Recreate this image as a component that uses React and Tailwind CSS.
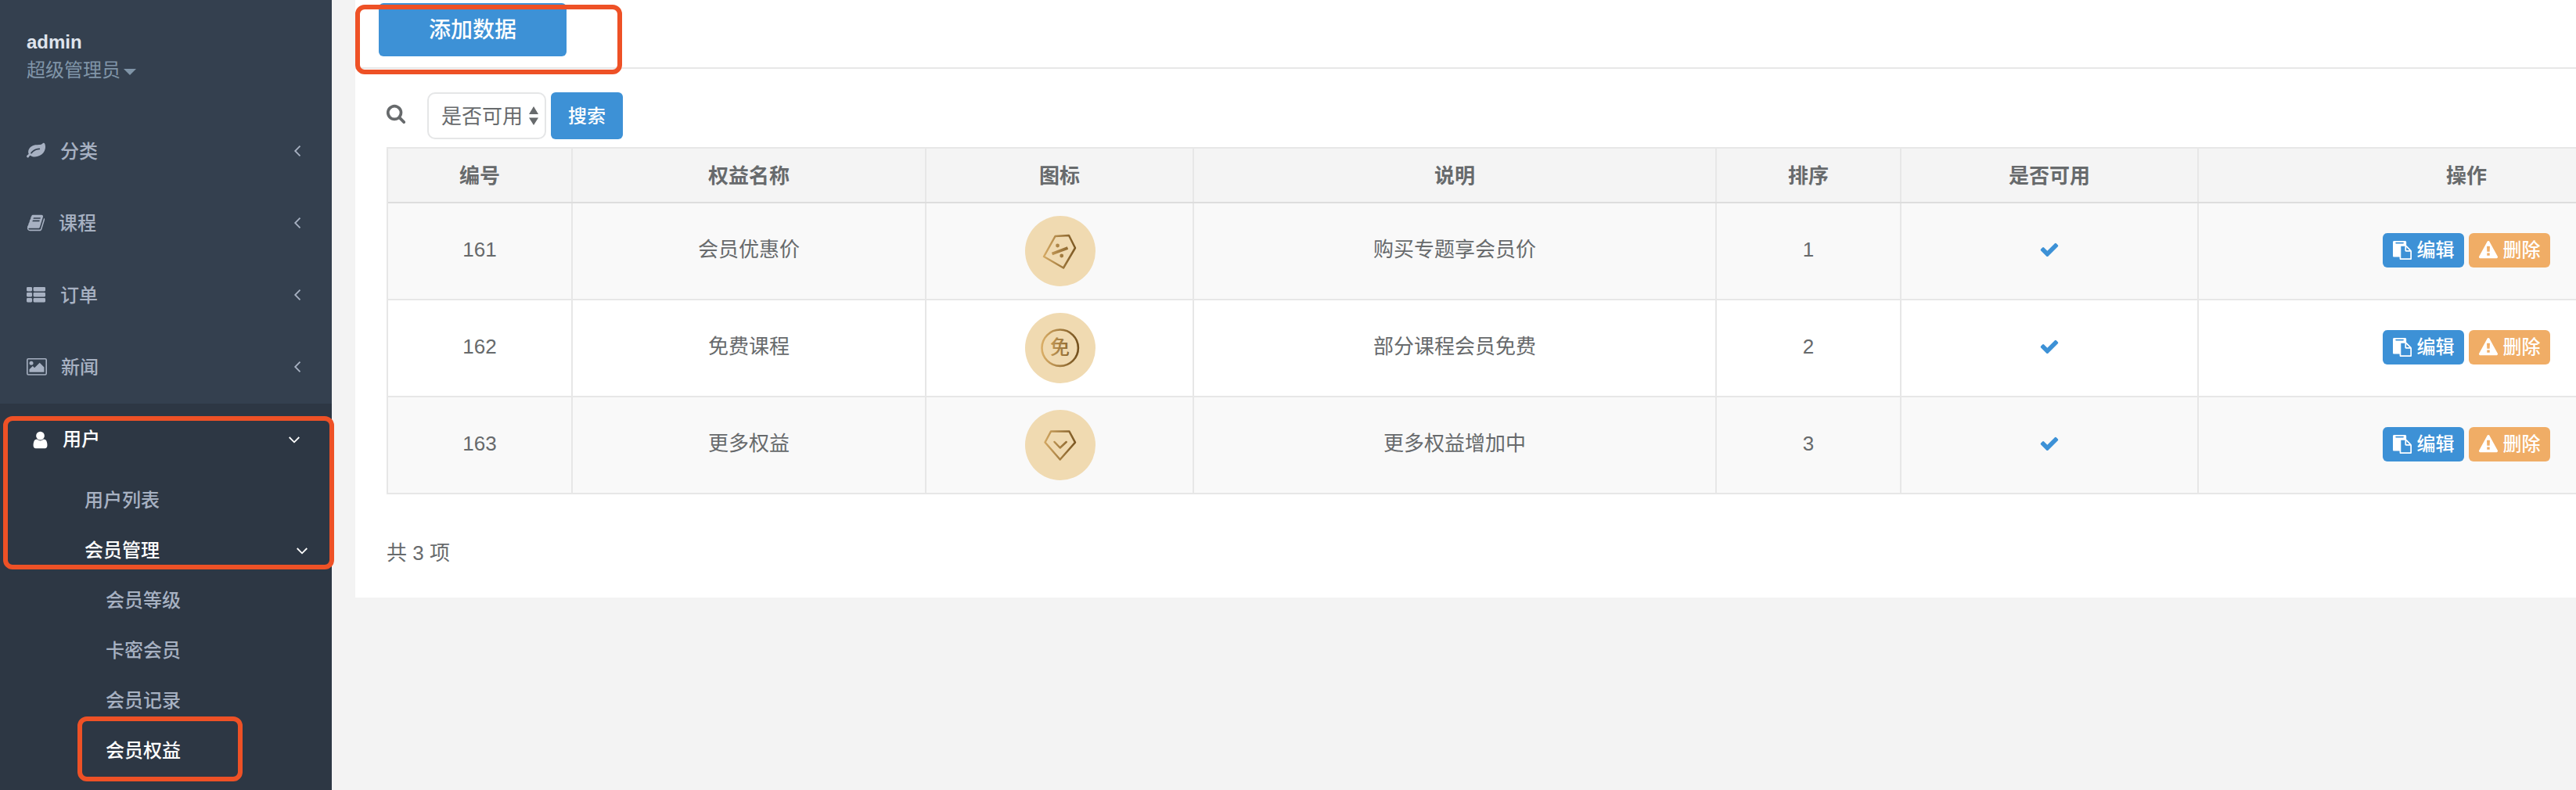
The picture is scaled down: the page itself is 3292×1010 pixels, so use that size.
import clsx from 'clsx';

const ICONS = {
    leaf: "M1280 704q0-26-19-45t-45-19q-172 0-318 49.5t-259.5 134-235.5 219.5q-19 21-19 45 0 26 19 45t45 19q24 0 45-19 27-24 74-71t67-66q137-124 268.5-176t313.5-52q26 0 45-19t19-45zM1792 506q0 95-20 193-46 224-184.5 383t-357.5 268q-214 108-438 108-148 0-286-47-15-5-88-42t-96-37q-16 0-39.5 32t-45 70-52.5 70-60 32q-43 0-63.5-17.5t-45.5-59.5q-2-4-6-11t-5.5-10-3-9.5-1.5-13.5q0-35 31-73.5t68-65.5 68-56 31-48q0-4-14-38t-16-44q-9-51-9-104 0-115 43.5-220t119-184.5 170.5-139 204-95.5q55-18 145-25.5t179.5-9 178.5-6 163.5-24 113.5-56.5l29.5-29.5 29.5-28 27-20 36.5-16 43.5-4.5q39 0 70.5 46t47.5 112 24 124 8 96z",
    book: "M1703 478q40 57 18 129l-275 906q-19 64-76.5 107.5t-122.5 43.5h-923q-77 0-148.5-53.5t-99.5-131.5q-24-67-2-127 0-4 3-27t4-37q1-8-3-21.5t-3-19.5q2-11 8-21t16.5-23.5 16.5-23.5q23-38 45-91.5t30-91.5q3-10 .5-30t-.5-28q3-11 17-28t17-23q21-36 42-92t25-90q1-9-2.5-32t.5-28q4-13 22-30.5t22-22.5q19-26 42.5-84.5t27.5-96.5q1-8-3-25.5t-2-26.5q2-8 9-18t18-23 17-21q8-12 16.5-30.5t15-35 16-36 19.5-32 26.5-23.5 36-11.5 47.5 5.5l-1 3q38-9 51-9h761q74 0 114 56t18 130l-274 906q-36 119-71.5 153.5t-128.5 34.5h-869q-27 0-38 15-11 16-1 43 24 70 144 70h923q29 0 56-15.5t35-41.5l300-987q7-22 5-57 38 15 59 43zm-1064 2q-4 13 2 22.5t20 9.5h608q13 0 25.5-9.5t16.5-22.5l21-64q4-13-2-22.5t-20-9.5h-608q-13 0-25.5 9.5t-16.5 22.5zm-83 256q-4 13 2 22.5t20 9.5h608q13 0 25.5-9.5t16.5-22.5l21-64q4-13-2-22.5t-20-9.5h-608q-13 0-25.5 9.5t-16.5 22.5z",
    user: "M1536 1399q0 109-62.5 187t-150.5 78h-854q-88 0-150.5-78t-62.5-187q0-85 8.5-160.5t31.5-152 58.5-131 94-89 134.5-34.5q131 128 313 128t313-128q76 0 134.5 34.5t94 89 58.5 131 31.5 152 8.5 160.5zm-256-887q0 159-112.5 271.5t-271.5 112.5-271.5-112.5-112.5-271.5 112.5-271.5 271.5-112.5 271.5 112.5 112.5 271.5z",
    search: "M1216 832q0-185-131.5-316.5t-316.5-131.5-316.5 131.5-131.5 316.5 131.5 316.5 316.5 131.5 316.5-131.5 131.5-316.5zm512 832q0 52-38 90t-90 38q-54 0-90-38l-343-342q-179 124-399 124-143 0-273.5-55.5t-225-150-150-225-55.5-273.5 55.5-273.5 150-225 225-150 273.5-55.5 273.5 55.5 225 150 150 225 55.5 273.5q0 220-124 399l343 343q37 37 37 90z",
    check: "M1671 566q0 40-28 68l-724 724-136 136q-28 28-68 28t-68-28l-136-136-362-362q-28-28-28-68t28-68l136-136q28-28 68-28t68 28l294 295 656-657q28-28 68-28t68 28l136 136q28 28 28 68z",
    paste: "M768 1664h896v-640h-416q-40 0-68-28t-28-68v-416h-384v1152zm256-1440v-64q0-13-9.5-22.5t-22.5-9.5h-704q-13 0-22.5 9.5t-9.5 22.5v64q0 13 9.5 22.5t22.5 9.5h704q13 0 22.5-9.5t9.5-22.5zm256 672h299l-299-299v299zm512 128v672q0 40-28 68t-68 28h-960q-40 0-68-28t-28-68v-160h-544q-40 0-68-28t-28-68v-1344q0-40 28-68t68-28h1088q40 0 68 28t28 68v328q21 13 36 28l408 408q28 28 48 76t20 88z",
    warning: "M1024 1375v-190q0-14-9.5-23.5t-22.5-9.5h-192q-13 0-22.5 9.5t-9.5 23.5v190q0 14 9.5 23.5t22.5 9.5h192q13 0 22.5-9.5t9.5-23.5zm-2-374l18-459q0-12-10-19-13-11-24-11h-220q-11 0-24 11-10 7-10 21l17 457q0 10 10 16.5t24 6.5h185q14 0 23.5-6.5t10.5-16.5zm-14-934l768 1408q35 63-2 126-17 29-46.5 46t-63.5 17h-1536q-34 0-63.5-17t-46.5-46q-37-63-2-126l768-1408q17-31 47-49t65-18 65 18 47 49z",
};

function Icon({ name, className }) {
    return (
        <svg viewBox="0 0 1792 1792" fill="currentColor" className={clsx("shrink-0", className)}>
            <path d={ICONS[name]} />
        </svg>
    );
}

function ListIcon() {
    return (
        <svg viewBox="0 0 24 20" fill="currentColor" className="w-6 h-5 shrink-0">
            {[0, 7, 14].map((y) => (
                <g key={y}>
                    <rect x="0" y={y} width="7" height="5.4" rx="1.3" />
                    <rect x="8.6" y={y} width="15.4" height="5.4" rx="1.3" />
                </g>
            ))}
        </svg>
    );
}

function ImageIcon() {
    return (
        <svg viewBox="0 0 26 22" fill="currentColor" className="w-[26px] h-[22px] shrink-0">
            <rect x="0.8" y="0.8" width="24.4" height="20.2" rx="1.4" fill="none" stroke="currentColor" strokeWidth="1.6" />
            <circle cx="6" cy="6.3" r="2.5" />
            <path d="M3.5 17.7v-3.4l4.3-4.2 2.3 2.2 6.6-6.6 5.7 5.7v6.3z" />
        </svg>
    );
}

function Chevron({ open, className }) {
    return (
        <svg
            viewBox="0 0 14 14"
            fill="none"
            stroke="currentColor"
            strokeWidth="1.8"
            className={clsx("w-[14px] h-[14px] shrink-0", className)}
        >
            <path d={open ? "M0.7 4l6.3 6.3L13.3 4" : "M10.5 0.7L4.2 7l6.3 6.3"} />
        </svg>
    );
}

const menu = [
    { label: '分类', icon: <Icon name="leaf" className="w-6 h-6" />, gap: "gap-[19px]" },
    { label: '课程', icon: <Icon name="book" className="w-6 h-6 -mr-[2px]" />, gap: "gap-[19px]" },
    { label: '订单', icon: <ListIcon />, gap: "gap-[19px]" },
    { label: '新闻', icon: <ImageIcon />, gap: "gap-[18px]" },
];

const memberMenu = ['会员等级', '卡密会员', '会员记录', '会员权益'];

function Sidebar() {
    return (
        <aside className="w-[424px] h-full shrink-0 bg-[#34404f] text-[#a7b1c2] text-2xl font-medium overflow-hidden">
            <div className="h-[147px] pl-[34px] pt-[36px]">
                <div className="h-[35px] leading-[35px] font-bold text-[#dfe4ed]">admin</div>
                <div className="h-[38px] leading-[38px] flex items-center font-normal text-[#8095a8]">
                    超级管理员
                    <svg viewBox="0 0 16 8" className="w-4 h-2 ml-1 mt-[4px]" fill="currentColor">
                        <path d="M0 0h16l-8 8z" />
                    </svg>
                </div>
            </div>
            <ul>
                {menu.map((item) => (
                    <li key={item.label} className={clsx("h-[92px] pl-[34px] pr-[37px] flex items-center", item.gap)}>
                        {item.icon}
                        <span className="pt-[2px]">{item.label}</span>
                        <Chevron className="ml-auto" />
                    </li>
                ))}
            </ul>
            <div className="mt-px h-[494px] bg-[#2d3744]">
                <div className="h-[92px] pl-[39px] pr-[41px] flex items-center text-white">
                    <Icon name="user" className="w-[25px] h-[25px]" />
                    <span className="ml-4">用户</span>
                    <Chevron open className="ml-auto" />
                </div>
                <div className="h-16 pl-[108px] leading-[64px]">用户列表</div>
                <div className="h-16 pl-[108px] pr-[31px] flex items-center text-white">
                    <span className="leading-[62px]">会员管理</span>
                    <Chevron open className="ml-auto" />
                </div>
                {memberMenu.map((label) => (
                    <div
                        key={label}
                        className={clsx("h-16 pl-[135px] leading-[64px]", label === '会员权益' && "text-white")}
                    >
                        {label}
                    </div>
                ))}
            </div>
        </aside>
    );
}

function Badge({ type }) {
    const stroke = `url(#gold-${type})`;
    return (
        <svg viewBox="0 0 90 90" className="w-[90px] h-[90px]" fill="none">
            <defs>
                <linearGradient id={`gold-${type}`} gradientUnits="userSpaceOnUse" x1="22" y1="45" x2="68" y2="45">
                    <stop offset="0" stopColor="#d9ad66" />
                    <stop offset="1" stopColor="#73501d" />
                </linearGradient>
            </defs>
            <circle cx="45" cy="45" r="45" fill="#f0dab1" />
            {type === 'discount' && (
                <g stroke={stroke} strokeWidth="2.5">
                    <path d="M38.5 26L56 25l8 16-15 25.5L24 52z" strokeLinejoin="round" />
                    <path d="M34.5 48.5L54.5 41" strokeWidth="3.6" />
                    <circle cx="41.5" cy="38" r="2.4" fill={stroke} stroke="none" />
                    <circle cx="46.7" cy="51" r="2.4" fill={stroke} stroke="none" />
                </g>
            )}
            {type === 'free' && (
                <g>
                    <circle cx="44.7" cy="44.7" r="23.2" stroke={stroke} strokeWidth="2.6" />
                    <text x="44.6" y="53" textAnchor="middle" fontSize="25" fill={stroke} fontWeight="500">免</text>
                </g>
            )}
            {type === 'more' && (
                <g stroke={stroke} strokeWidth="2.5" strokeLinejoin="round" strokeLinecap="round">
                    <path d="M33 27.5l23.500.1 7.500 14L44.7 63.5 25.5 41.5z" />
                    <path d="M37.5 41l7.2 7.5 8-7.5" />
                </g>
            )}
        </svg>
    );
}

const rows = [
    { id: 161, name: '会员优惠价', badge: 'discount', desc: '购买专题享会员价', order: 1 },
    { id: 162, name: '免费课程', badge: 'free', desc: '部分课程会员免费', order: 2 },
    { id: 163, name: '更多权益', badge: 'more', desc: '更多权益增加中', order: 3 },
];

const headers = ['编号', '权益名称', '图标', '说明', '排序', '是否可用', '操作'];

const gridCols = "grid grid-cols-[236px_452px_342px_668px_236px_380px_686px]";
const cell = "border-r-2 border-[#e7e7e7] flex items-center justify-center";

function BenefitTable() {
    return (
        <div className="w-[3002px] border-l-2 border-t-2 border-[#e7e7e7]">
            <div className={clsx(gridCols, "h-[70px] bg-[#f4f4f4] font-bold border-b-2 border-[#dddddd]")}>
                {headers.map((h) => (
                    <div key={h} className={clsx(cell, "pt-[2px]")}>{h}</div>
                ))}
            </div>
            {rows.map((row, i) => (
                <div
                    key={row.id}
                    className={clsx(gridCols, "h-[124px] border-b-2 border-[#e7e7e7]", i % 2 === 0 ? "bg-[#f9f9f9]" : "bg-white")}
                >
                    <div className={clsx(cell, "pb-[4px]")}>{row.id}</div>
                    <div className={clsx(cell, "pb-[4px]")}>{row.name}</div>
                    <div className={clsx(cell, "pl-[2px]")}><Badge type={row.badge} /></div>
                    <div className={clsx(cell, "pb-[4px]")}>{row.desc}</div>
                    <div className={clsx(cell, "pb-[4px]")}>{row.order}</div>
                    <div className={clsx(cell, "pb-[4px]")}>
                        <Icon name="check" className="w-[26px] h-[26px] text-[#3d91d6]" />
                    </div>
                    <div className={clsx(cell, "pb-[2px] gap-[6px] text-2xl font-medium text-white")}>
                        <button className="w-[104px] h-11 rounded-md bg-[#3d91d6] flex items-center justify-center gap-[7px]">
                            <Icon name="paste" className="w-6 h-6" />
                            编辑
                        </button>
                        <button className="w-[104px] h-11 rounded-md bg-[#f0ad66] flex items-center justify-center gap-[7px]">
                            <Icon name="warning" className="w-6 h-6" />
                            删除
                        </button>
                    </div>
                </div>
            ))}
        </div>
    );
}

function Content() {
    return (
        <main className="ml-[30px] h-[764px] flex-1 min-w-0 bg-white text-[#676a6c] text-[26px] overflow-hidden">
            <div className="h-[88px] pt-1 pl-[30px] border-b-2 border-[#e7e7e7]">
                <button className="w-[240px] h-[68px] pt-[2px] rounded-md bg-[#3d91d6] text-white text-[28px] font-medium">添加数据</button>
            </div>
            <div className="pl-10">
                <div className="pt-[30px] pb-[10px] flex items-center">
                    <Icon name="search" className="w-[26px] h-[26px] -ml-px -mt-[6px]" />
                    <div className="ml-[27px] w-[152px] h-[60px] pl-4 pr-2 border-2 border-[#e5e6e7] rounded-[10px] flex items-center justify-between">
                        <span className="pt-[2px]">是否可用</span>
                        <svg viewBox="0 0 12 24" className="w-3 h-6" fill="currentColor">
                            <path d="M6 0l6 10H0zM6 24l6-9.5H0z" />
                        </svg>
                    </div>
                    <button className="ml-[6px] w-[92px] h-[60px] pt-px rounded-md bg-[#3d91d6] text-white text-2xl font-medium">搜索</button>
                </div>
                <BenefitTable />
                <div className="mt-[56px] leading-[39px]">共 3 项</div>
            </div>
        </main>
    );
}

// red outline drawn over a part of the page
function Marker({ className }) {
    return <div className={clsx("absolute border-[6px] border-[#ee5126] rounded-xl pointer-events-none", className)} />;
}

export default function App() {
    return (
        <div className="relative w-full h-[1010px] flex items-start overflow-hidden bg-[#f3f3f3] font-['Liberation_Sans','Noto_Sans_CJK_SC',sans-serif]">
            <Sidebar />
            <Content />
            <Marker className="left-[454px] top-[6px] w-[341px] h-[89px]" />
            <Marker className="left-[4px] top-[532px] w-[423px] h-[196px]" />
            <Marker className="left-[99px] top-[916px] w-[211px] h-[83px]" />
        </div>
    );
}
